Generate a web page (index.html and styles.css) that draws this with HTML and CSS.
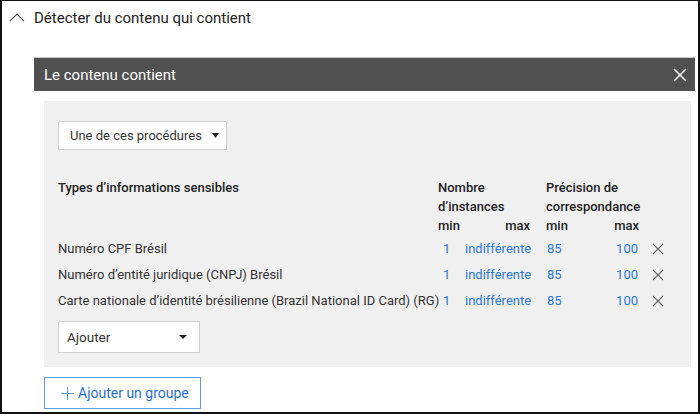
FILE: index.html
```html
<!DOCTYPE html>
<html lang="fr">
<head>
<meta charset="utf-8">
<link rel="stylesheet" href="styles.css">
</head>
<body>
<div class="frame">
  <div class="section-head">
    <svg class="chevron" width="16" height="10" viewBox="0 0 16 10"><polyline points="1,9 8,2 15,9" fill="none" stroke="#555" stroke-width="1.1"/></svg>
    <span class="section-title">Détecter du contenu qui contient</span>
  </div>
  <div class="panel">
    <div class="panel-head">
      <span class="panel-title">Le contenu contient</span>
      <svg class="close" width="14" height="14" viewBox="0 0 14 14"><path d="M1 1L13 13M13 1L1 13" stroke="#fff" stroke-width="1.5" fill="none"/></svg>
    </div>
    <div class="panel-body">
      <div class="select select-any">
        <span>Une de ces procédures</span>
        <svg class="caret" width="7" height="5" viewBox="0 0 7 5"><path d="M0 0H7L3.5 5Z" fill="#222"/></svg>
      </div>
      <div class="grid">
        <div class="h h-name">Types d’informations sensibles</div>
        <div class="h h-inst">Nombre<br>d’instances</div>
        <div class="h h-prec">Précision de<br>correspondance</div>
        <div class="h sub c-imin">min</div>
        <div class="h sub c-imax">max</div>
        <div class="h sub c-pmin">min</div>
        <div class="h sub c-pmax">max</div>

        <div class="cell name">Numéro CPF Brésil</div>
        <div class="cell v c-imin">1</div>
        <div class="cell v c-imax">indifférente</div>
        <div class="cell v c-pmin">85</div>
        <div class="cell v c-pmax">100</div>
        <div class="cell del"><svg width="12" height="12" viewBox="0 0 12 12"><path d="M1 1L11 11M11 1L1 11" stroke="#666" stroke-width="1.1" fill="none"/></svg></div>

        <div class="cell name">Numéro d’entité juridique (CNPJ) Brésil</div>
        <div class="cell v c-imin">1</div>
        <div class="cell v c-imax">indifférente</div>
        <div class="cell v c-pmin">85</div>
        <div class="cell v c-pmax">100</div>
        <div class="cell del"><svg width="12" height="12" viewBox="0 0 12 12"><path d="M1 1L11 11M11 1L1 11" stroke="#666" stroke-width="1.1" fill="none"/></svg></div>

        <div class="cell name">Carte nationale d’identité brésilienne (Brazil National ID Card) (RG)</div>
        <div class="cell v c-imin">1</div>
        <div class="cell v c-imax">indifférente</div>
        <div class="cell v c-pmin">85</div>
        <div class="cell v c-pmax">100</div>
        <div class="cell del"><svg width="12" height="12" viewBox="0 0 12 12"><path d="M1 1L11 11M11 1L1 11" stroke="#666" stroke-width="1.1" fill="none"/></svg></div>
      </div>
      <div class="select select-add">
        <span>Ajouter</span>
        <svg class="caret" width="8" height="4" viewBox="0 0 8 4"><path d="M0 0H8L4 4Z" fill="#222"/></svg>
      </div>
    </div>
    <div class="add-group">
      <svg width="13" height="13" viewBox="0 0 13 13"><path d="M6.5 0V13M0 6.5H13" stroke="#5b9be6" stroke-width="1.1" fill="none"/></svg>
      <span>Ajouter un groupe</span>
    </div>
  </div>
</div>
</body>
</html>
```
FILE: styles.css
```css
* { box-sizing: border-box; }
html, body { margin: 0; padding: 0; background: #fff; }
body { font-family: "Roboto", "Noto Sans", sans-serif; color: #333; }

.frame {
  width: 700px;
  height: 414px;
  border-style: solid;
  border-color: #111;
  border-width: 1px 2px 2px 2px;
  overflow: hidden;
}

.section-head {
  display: flex;
  align-items: center;
  height: 34px;
  padding-left: 7px;
}
.chevron { margin-right: 9px; margin-top: -2px; }
.section-title { font-size: 15px; color: #222; }

.panel { margin: 22px 3px 0 32px; }

.panel-head {
  height: 34px;
  background: #505050;
  border-top: 1px solid #c8c8c8;
  display: flex;
  align-items: center;
  justify-content: space-between;
  padding: 0 8px 0 10px;
}
.panel-title { color: #fff; font-size: 15px; }

.panel-body {
  margin: 10px 4px 0 10px;
  background: #f0f0f0;
  padding: 20px 14px 14px 14px;
}

.select {
  background: #fff;
  border: 1px solid #cfcfcf;
  display: flex;
  align-items: center;
  justify-content: space-between;
  color: #333;
}
.select-any {
  width: 169px;
  height: 29px;
  padding: 0 7px 0 11px;
  font-size: 13px;
}
.select-add {
  width: 142px;
  height: 32px;
  padding: 0 12px 0 8px;
  font-size: 13.5px;
  margin-top: 8px;
}

.grid {
  display: grid;
  grid-template-columns: 380px 27px 67px 14px 47px 46px 30px;
  margin-top: 28px;
  font-size: 13px;
}
.h { line-height: 19px; color: #222; font-weight: 500; white-space: nowrap; }
.h-name { grid-column: 1; grid-row: 1 / span 3; }
.h-inst { grid-column: 2 / span 2; grid-row: 1 / span 2; }
.h-prec { grid-column: 5 / span 2; grid-row: 1 / span 2; }
.sub { grid-row: 3; }
.c-imin { grid-column: 2; }
.c-imax { grid-column: 3; text-align: right; }
.c-pmin { grid-column: 5; }
.c-pmax { grid-column: 6; text-align: right; }
.h.c-imax { padding-right: 2px; }

.cell { height: 26px; display: flex; align-items: center; white-space: nowrap; }
.name { grid-column: 1; color: #333; }
.v { color: #2b79d6; }
.v.c-imin { padding-left: 5px; }
.v.c-imax { justify-content: flex-start; }
.v.c-pmin { padding-left: 1px; }
.v.c-pmax { justify-content: flex-end; padding-right: 1px; }
.del { grid-column: 7; padding-left: 13px; padding-top: 1px; }

.add-group {
  margin-top: 10px;
  margin-left: 10px;
  width: 157px;
  height: 32px;
  border: 1.5px solid #5a9de8;
  display: flex;
  align-items: center;
  padding-left: 16px;
  gap: 4px;
  color: #2b6fcf;
  font-size: 14px;
  white-space: nowrap;
}
```
